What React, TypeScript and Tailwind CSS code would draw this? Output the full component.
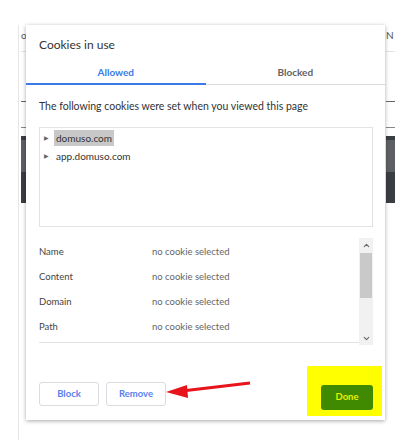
import { ChevronDown, ChevronUp } from "lucide-react";

const rows = [
  { label: "Name", value: "no cookie selected" },
  { label: "Content", value: "no cookie selected" },
  { label: "Domain", value: "no cookie selected" },
  { label: "Path", value: "no cookie selected" },
];

function App() {
  return (
    <div className="relative h-[440px] w-[405px] overflow-hidden bg-white font-['Lato','Noto_Sans',sans-serif] text-[#333]">
      <div className="flex pl-[18px] pt-[25px]">
        <SideStrip letter="o" className="w-[8px] border-l border-[#e6e6e6] pl-[2px]" />
        <CookieDialog />
        <SideStrip letter="N" className="w-[10px] pl-[1px]" />
      </div>
      <Arrow />
    </div>
  );
}

function SideStrip({ letter, className }: { letter: string; className: string }) {
  return (
    <div className={`h-[415px] shrink-0 overflow-hidden ${className}`}>
      <p className="h-[20px] pt-[4px] text-[10px] leading-[12px] text-[#555]">{letter}</p>
      <div className="mt-[6px] h-px bg-[#e2e2e2]" />
      <div className="mt-[49px] h-px bg-[#666]" />
      <div className="mt-[25px] h-px bg-[#888]" />
      <div className="mt-[8px] h-[4px] bg-[#3a3d42]" />
      <div className="h-[32px] bg-[#5d5f63]" />
      <div className="h-[31px] bg-[#3a3d42]" />
    </div>
  );
}

function CookieDialog() {
  return (
    <div className="relative z-10 h-[395px] w-[359px] shrink-0 bg-white shadow-[0_1px_4px_rgba(0,0,0,0.35)]">
      <h2 className="pl-[13px] pt-[11px] text-[12px] leading-[18px] text-[#333]">Cookies in use</h2>

      <div className="mt-[4px] flex h-[27px]">
        <div className="flex-1 border-b-2 border-[#3b7be6] pt-[7px] text-center text-[10px] leading-[15px] font-bold text-[#3b7be6]">
          Allowed
        </div>
        <div className="flex-1 border-b border-[#dcdcdc] pt-[7px] text-center text-[10px] leading-[15px] font-bold text-[#5f6368]">
          Blocked
        </div>
      </div>

      <div className="px-[13px] pr-[12px]">
        <p className="pt-[14px] text-[10.5px] leading-[15px] text-[#333]">
          The following cookies were set when you viewed this page
        </p>

        <div className="mt-[13px] h-[100px] border border-[#e3e3e3] pt-[1px]">
          <TreeItem label="domuso.com" selected />
          <TreeItem label="app.domuso.com" />
        </div>

        <div className="mt-[11px] flex h-[107px]">
          <div className="h-[105px] flex-1 border-b border-[#e3e3e3] pt-[2px]">
            {rows.map((row) => (
              <div key={row.label} className="flex h-[25px] items-center text-[9.5px]">
                <span className="w-[113px] text-[#444]">{row.label}</span>
                <span className="text-[#666]">{row.value}</span>
              </div>
            ))}
          </div>
          <Scrollbar />
        </div>
      </div>

      <div className="mt-[21px] flex h-[50px] justify-between pr-[3px]">
        <div className="flex gap-[7px] pl-[13px] pt-[16px]">
          <OutlineButton label="Block" />
          <OutlineButton label="Remove" />
        </div>
        <div className="bg-[#ffff00] pl-[14px] pr-[9px] pt-[16px] pb-[9px]">
          <button className="h-[25px] w-[52px] rounded-[3px] bg-[#3f8a00] text-[9.5px] font-bold text-[#e6f000]">
            Done
          </button>
        </div>
      </div>
    </div>
  );
}

function TreeItem({ label, selected }: { label: string; selected?: boolean }) {
  return (
    <div className="flex h-[18px] items-center pl-[4px]">
      <span className="mr-[5px] text-[6px] leading-none text-[#666]">▶</span>
      <span
        className={`px-[2px] text-[10px] leading-[16px] ${selected ? "bg-[#c8c8c8] text-[#333]" : "text-[#333]"}`}
      >
        {label}
      </span>
    </div>
  );
}

function Scrollbar() {
  return (
    <div className="flex w-[14px] flex-col items-center bg-[#f1f1f1]">
      <div className="flex h-[15px] items-center">
        <ChevronUp size={9} strokeWidth={3} color="#666" />
      </div>
      <div className="h-[45px] w-[12px] bg-[#c9c9c9]" />
      <div className="flex-1" />
      <div className="flex h-[13px] items-center">
        <ChevronDown size={9} strokeWidth={3} color="#666" />
      </div>
    </div>
  );
}

function OutlineButton({ label }: { label: string }) {
  return (
    <button className="h-[24px] w-[60px] rounded-[3px] border border-[#dadce0] bg-white text-[9.5px] font-bold text-[#5a7ff0]">
      {label}
    </button>
  );
}

function Arrow() {
  return (
    <svg className="absolute left-[160px] top-[375px] z-20" width="100" height="30" viewBox="0 0 100 30">
      <line x1="90" y1="8" x2="22" y2="16" stroke="#e8141b" strokeWidth="3" />
      <polygon points="6,17 27,10 28,23" fill="#e8141b" />
    </svg>
  );
}

export default App;
